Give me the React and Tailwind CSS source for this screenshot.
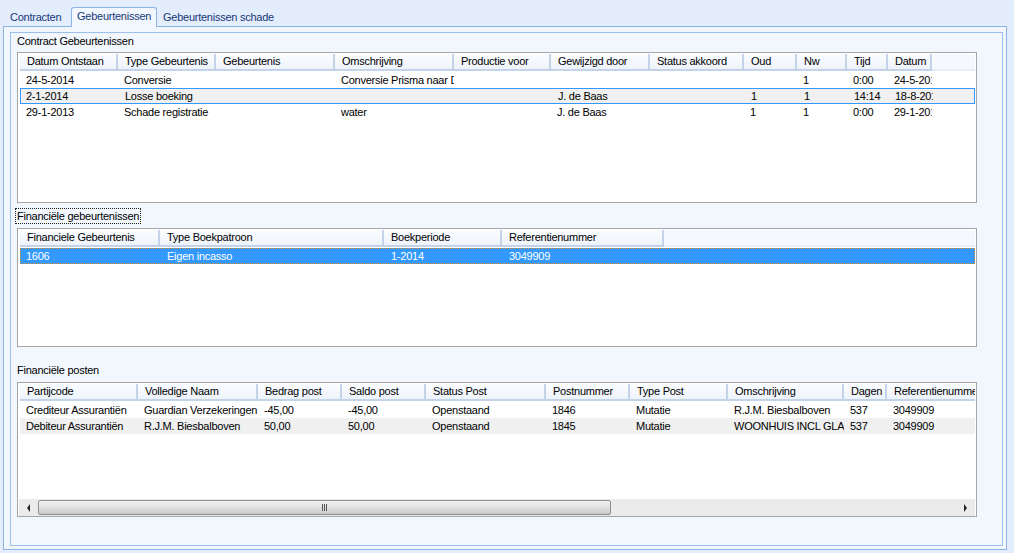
import React from 'react';

const list1Cols = [98, 98, 119, 119, 97, 99, 94, 53, 50, 41, 44];
const list1Head = ['Datum Ontstaan', 'Type Gebeurtenis', 'Gebeurtenis', 'Omschrijving', 'Productie voor', 'Gewijzigd door', 'Status akkoord', 'Oud', 'Nw', 'Tijd', 'Datum'];
const list1Rows = [
  ['24-5-2014', 'Conversie', '', 'Conversie Prisma naar Datawarehouse', '', '', '', '', '1', '0:00', '24-5-2014'],
  ['2-1-2014', 'Losse boeking', '', '', '', 'J. de Baas', '', '1', '1', '14:14', '18-8-2014'],
  ['29-1-2013', 'Schade registratie', '', 'water', '', 'J. de Baas', '', '1', '1', '0:00', '29-1-2013'],
];

const list2Cols = [140, 224, 118, 162];
const list2Head = ['Financiele Gebeurtenis', 'Type Boekpatroon', 'Boekperiode', 'Referentienummer'];
const list2Rows = [['1606', 'Eigen incasso', '1-2014', '3049909']];

const list3Cols = [118, 120, 84, 84, 120, 84, 98, 116, 43, 90];
const list3Head = ['Partijcode', 'Volledige Naam', 'Bedrag post', 'Saldo post', 'Status Post', 'Postnummer', 'Type Post', 'Omschrijving', 'Dagen', 'Referentienummer'];
const list3Rows = [
  ['Crediteur Assurantiën', 'Guardian Verzekeringen', '-45,00', '-45,00', 'Openstaand', '1846', 'Mutatie', 'R.J.M. Biesbalboven', '537', '3049909'],
  ['Debiteur Assurantiën', 'R.J.M. Biesbalboven', '50,00', '50,00', 'Openstaand', '1845', 'Mutatie', 'WOONHUIS INCL GLAS', '537', '3049909'],
];

function Header({ cols, labels }) {
  return (
    <div className="flex h-[17px] shrink-0 overflow-hidden bg-[#f5f8fd]">
      {cols.map((w, i) => (
        <div
          key={i}
          style={{ width: w }}
          className="shrink-0 overflow-hidden whitespace-nowrap border-r-2 border-b-2 border-[#c3d3ea] bg-gradient-to-b from-[#fafcff] to-[#eef3fb] pl-[7px] leading-[15px]"
        >
          {labels[i]}
        </div>
      ))}
      <div className="flex-1 border-b-2 border-[#e6edf7]" />
    </div>
  );
}

function Row({ cols, cells, className = '' }) {
  return (
    <div className={`flex h-[16px] shrink-0 items-center ${className}`}>
      {cols.map((w, i) => (
        <div key={i} style={{ width: w }} className="shrink-0 overflow-hidden whitespace-nowrap pl-[6px] pr-[2px] leading-[14px]">
          {cells[i]}
        </div>
      ))}
    </div>
  );
}

function ScrollBar() {
  return (
    <div className="flex h-[17px] shrink-0 items-center bg-[#ebebeb]">
      <div className="flex h-full w-[19px] shrink-0 items-center justify-center">
        <div className="h-0 w-0 border-y-[4px] border-r-[3px] border-y-transparent border-r-[#222]" />
      </div>
      <div className="flex h-[15px] w-[573px] shrink-0 items-center justify-center rounded-[2px] border border-[#8f8f8f] bg-gradient-to-b from-[#f1f1f1] via-[#e0e0e0] to-[#c9c9c9]">
        <div className="flex gap-[1px]">
          <div className="h-[7px] w-[1px] bg-[#555]" />
          <div className="h-[7px] w-[1px] bg-[#555]" />
          <div className="h-[7px] w-[1px] bg-[#555]" />
        </div>
      </div>
      <div className="flex-1" />
      <div className="flex h-full w-[19px] shrink-0 items-center justify-center">
        <div className="h-0 w-0 border-y-[4px] border-l-[3px] border-y-transparent border-l-[#222]" />
      </div>
    </div>
  );
}

export default function App() {
  return (
    <div className="flex h-[553px] w-[1014px] flex-col overflow-hidden bg-[#e3edfb] font-['Liberation_Sans',Arial,sans-serif] text-[11px] tracking-[-0.25px] text-black">
      {/* tab strip */}
      <div className="flex h-[26px] shrink-0 items-end pl-[3px] text-[#15387a]">
        <div className="flex h-[18px] w-[68px] items-start pl-[7px] pt-[2px] leading-[14px]">Contracten</div>
        <div className="relative z-10 -mb-[1px] flex h-[20px] w-[86px] items-start rounded-t-[3px] border border-b-0 border-[#8db2e4] bg-[#f2f7fe] pl-[5px] pt-[1px] leading-[14px]">
          Gebeurtenissen
        </div>
        <div className="flex h-[18px] items-start pl-[6px] pt-[2px] leading-[14px]">Gebeurtenissen schade</div>
      </div>

      {/* tab page */}
      <div className="ml-[3px] flex h-[524px] w-[1004px] flex-col border border-[#8db2e4] bg-[#f2f7fe] pl-[6px] pr-[3px] pt-[5px] pb-[3px]">
        <div className="flex flex-1 flex-col border border-[#9dbfe9] bg-[#f2f7fe] pl-[6px]">
          <div className="h-[19px] shrink-0 pt-[1px] leading-[14px]">Contract Gebeurtenissen</div>

          <div className="flex h-[151px] w-[960px] shrink-0 flex-col border border-[#a6a6a6] bg-white pl-[2px] pr-[1px] pt-[1px]">
            <Header cols={list1Cols} labels={list1Head} />
            <div className="h-[1px] shrink-0" />
            <Row cols={list1Cols} cells={list1Rows[0]} />
            <Row cols={list1Cols} cells={list1Rows[1]} className="border border-[#3399ff] bg-[#f0f0f0] [&>div:first-child]:pl-[5px]" />
            <Row cols={list1Cols} cells={list1Rows[2]} />
          </div>

          <div className="flex h-[25px] shrink-0 items-center">
            <div className="-ml-[2px] border border-dotted border-[#222] px-[1px] leading-[14px]">Financiële gebeurtenissen</div>
          </div>

          <div className="flex h-[119px] w-[960px] shrink-0 flex-col border border-[#a6a6a6] bg-white pl-[2px] pr-[1px] pt-[1px]">
            <Header cols={list2Cols} labels={list2Head} />
            <div className="h-[1px] shrink-0" />
            <Row
              cols={list2Cols}
              cells={list2Rows[0]}
              className="border border-dotted border-[#d08a3c] bg-[#3399ff] text-white [&>div:first-child]:pl-[5px]"
            />
          </div>

          <div className="flex h-[35px] shrink-0 items-end pb-[5px] leading-[14px]">Financiële posten</div>

          <div className="flex h-[135px] w-[960px] shrink-0 flex-col overflow-hidden border border-[#a6a6a6] bg-white pl-[1px] pr-[1px] pt-[1px]">
            <div className="flex flex-1 flex-col pl-[1px]">
              <Header cols={list3Cols} labels={list3Head} />
              <div className="h-[1px] shrink-0" />
              <Row cols={list3Cols} cells={list3Rows[0]} />
              <Row cols={list3Cols} cells={list3Rows[1]} className="bg-[#f0f0f0]" />
            </div>
            <ScrollBar />
          </div>
        </div>
      </div>
    </div>
  );
}
